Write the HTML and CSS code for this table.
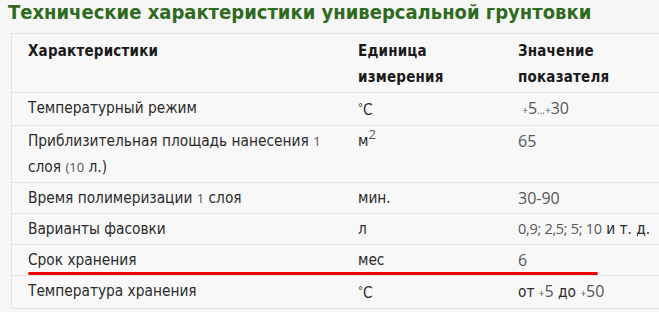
FILE: index.html
```html
<!DOCTYPE html>
<html lang="ru">
<head>
<meta charset="utf-8">
<link rel="stylesheet" href="styles.css">
</head>
<body>
<h2 class="title">Технические характеристики универсальной грунтовки</h2>
<table class="spec">
  <tr class="head">
    <th class="c1">Характеристики</th>
    <th class="c2">Единица измерения</th>
    <th class="c3">Значение показателя</th>
  </tr>
  <tr>
    <td>Температурный режим</td>
    <td><span class="deg">°</span>С</td>
    <td class="num">&nbsp;<span class="sm">+</span>5<span class="sm">...+</span>30</td>
  </tr>
  <tr>
    <td>Приблизительная площадь нанесения <span class="n">1</span> слоя <span class="n">(10</span> л.)</td>
    <td>м<sup class="n">2</sup></td>
    <td class="num">65</td>
  </tr>
  <tr>
    <td>Время полимеризации <span class="n">1</span> слоя</td>
    <td>мин.</td>
    <td class="num">30-90</td>
  </tr>
  <tr>
    <td>Варианты фасовки</td>
    <td>л</td>
    <td class="nowrap"><span class="num tight">0,9; 2,5; 5; 10</span> и т. д.</td>
  </tr>
  <tr class="marked">
    <td>Срок хранения<span class="redline"></span></td>
    <td>мес</td>
    <td class="num">6</td>
  </tr>
  <tr>
    <td>Температура хранения</td>
    <td><span class="deg">°</span>С</td>
    <td>от <span class="num"><span class="sm">+</span>5</span> до <span class="num"><span class="sm">+</span>50</span></td>
  </tr>
</table>
</body>
</html>
```
FILE: styles.css
```css
html, body {
  margin: 0;
  padding: 0;
  background: #f7f6f6;
  overflow: hidden;
}
body {
  padding: 0 0 0 8px;
  font-family: "DejaVu Sans Condensed", "DejaVu Sans", Verdana, sans-serif;
  color: #2b2b2b;
}
.title {
  margin: 0;
  padding-top: 0;
  height: 33px;
  font-family: "DejaVu Sans Condensed", "DejaVu Sans", sans-serif;
  font-size: 20px;
  font-weight: bold;
  color: #2f6b1f;
  line-height: 24px;
}
.spec {
  margin-left: 3px;
  border-collapse: collapse;
  width: 670px;
  background: #f9f8f8;
  font-size: 15.3px;
  line-height: 26px;
}
.spec th, .spec td {
  text-align: left;
  vertical-align: top;
  padding: 2px 8px 2px 16px;
  border-top: 1px solid #e4e2e2;
  border-bottom: 1px solid #e4e2e2;
}
.spec tr > :first-child {
  border-left: 1px solid #e4e2e2;
}
.spec th {
  font-weight: bold;
  font-size: 15px;
  letter-spacing: 0.2px;
  color: #1a1a1a;
  padding-top: 4px;
}
.c1 { width: 306px; }
.c2 { width: 136px; }
.nowrap { white-space: nowrap; }
.num, .n {
  font-family: "Open Sans", sans-serif;
  color: #555;
}
.num { font-size: 16px; }
.num.tight { font-size: 14.5px; letter-spacing: -0.3px; }
.n { font-size: 13px; }
.sm { font-size: 10px; }
.deg { font-size: 11px; vertical-align: 4px; }
sup { font-size: 10px; line-height: 0; vertical-align: 7px; }
.marked td:first-child { position: relative; }
.redline {
  position: absolute;
  left: 16px;
  bottom: 0;
  width: 570px;
  height: 3px;
  border-radius: 2px;
  background: #f30000;
}
```
